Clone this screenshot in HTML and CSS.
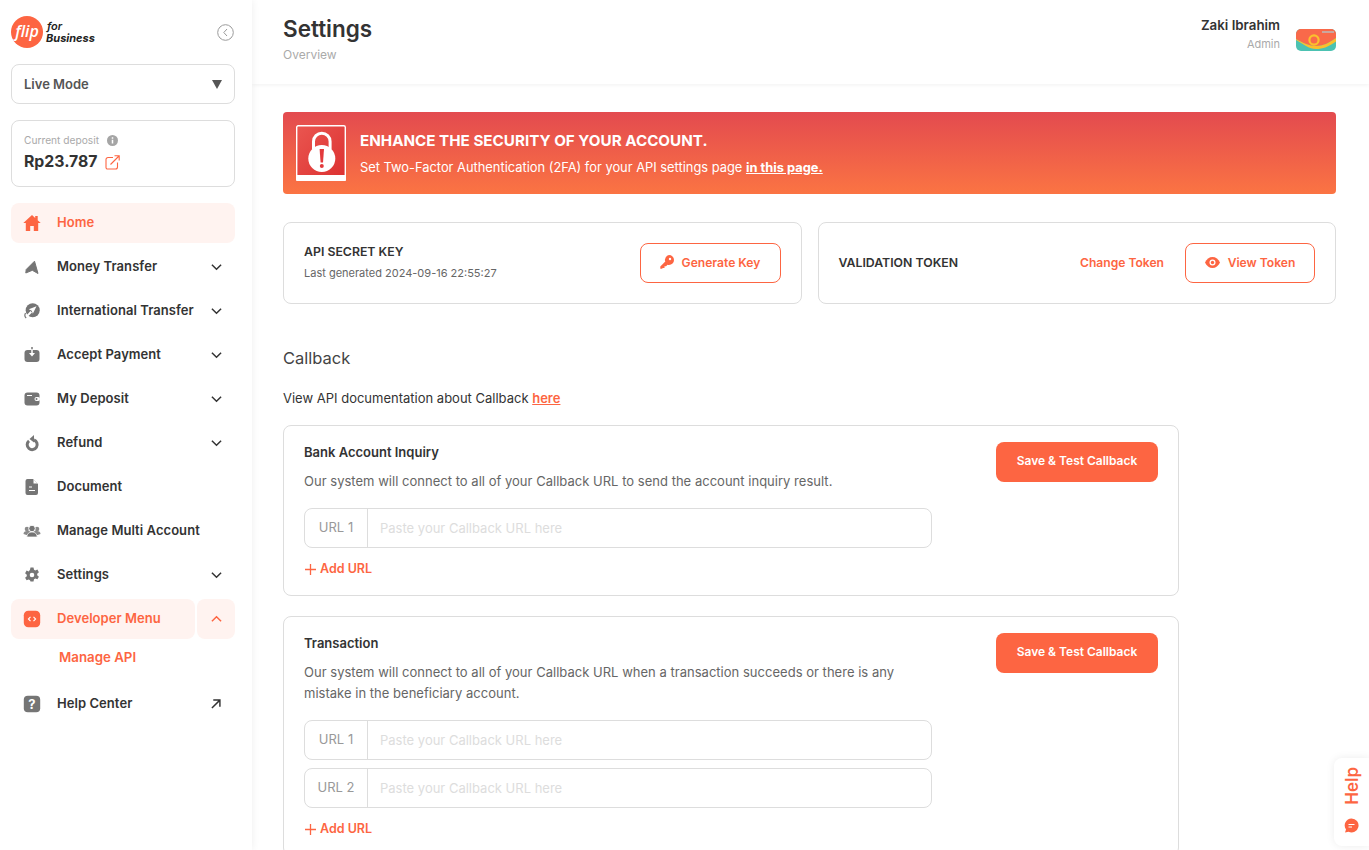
FILE: index.html
```html
<!DOCTYPE html>
<html lang="en">
<head>
<meta charset="utf-8">
<title>Settings</title>
<link rel="stylesheet" href="styles.css">
</head>
<body>
<div class="app">
  <aside class="sidebar">
    <div class="brand">
      <div class="logo"><span class="logo-circle">flip</span><span class="logo-text"><span>for</span><b>Business</b></span></div>
      <svg class="collapse" width="17" height="17" viewBox="0 0 17 17"><circle cx="8.5" cy="8.5" r="7.8" fill="none" stroke="#9a9a9a" stroke-width="1"/><path d="M10 5l-3.2 3.5L10 12" fill="none" stroke="#9a9a9a" stroke-width="1"/></svg>
    </div>
    <div class="mode"><span>Live Mode</span><svg width="10" height="9" viewBox="0 0 10 9"><path d="M0 0h10L5 9z" fill="#555"/></svg></div>
    <div class="deposit">
      <div class="deposit-label"><span>Current deposit</span><svg width="11" height="11" viewBox="0 0 11 11"><circle cx="5.5" cy="5.5" r="5.5" fill="#a5a5a5"/><path d="M5.5 2.3v1.4M5.5 4.8v3.6" stroke="#fff" stroke-width="1.5"/></svg></div>
      <div class="deposit-value"><span>Rp23.787</span><svg width="15" height="15" viewBox="0 0 15 15" fill="none" stroke="#fd6542" stroke-width="1.1"><path d="M8 2.5H3A2 2 0 0 0 1 4.5v8A1.5 1.5 0 0 0 2.500 14h8a2 2 0 0 0 2-2V7.500"/><path d="M5.500 9.500L14 1M9.500 .8H14.200V5.500"/></svg></div>
    </div>
    <nav class="menu">
      <a class="item active">
        <svg class="ico" viewBox="0 0 18 18"><path d="M9 1L.3 9h2.500v8h4.400v-5h3.600v5h4.400V9h2.500l-3-2.800V2h-2.500v1.900z" fill="#fd6542"/></svg>
        <span class="label">Home</span>
      </a>
      <a class="item">
        <svg class="ico" viewBox="0 0 18 18"><path d="M11.500 3.200L15 15.500L9.300 12.300L2.800 15L3.200 11.500z" fill="#757575" stroke="#757575" stroke-linejoin="round"/></svg>
        <span class="label">Money Transfer</span>
        <svg class="chev" viewBox="0 0 12 8"><path d="M1 1.500l5 5 5-5" fill="none" stroke="#333" stroke-width="1.600"/></svg>
      </a>
      <a class="item">
        <svg class="ico" viewBox="0 0 18 18"><circle cx="9.700" cy="8.300" r="7" fill="#757575"/><path d="M13.500 4.200L5.800 7.300l3 1.500 1 3z" fill="#fff"/><path d="M8.300 9.800l-5.300 5.300" stroke="#fff" stroke-width="2"/><path d="M2.500 11c-1 2-.8 3.800.7 5" fill="none" stroke="#757575" stroke-width="1.200"/></svg>
        <span class="label">International Transfer</span>
        <svg class="chev" viewBox="0 0 12 8"><path d="M1 1.500l5 5 5-5" fill="none" stroke="#333" stroke-width="1.600"/></svg>
      </a>
      <a class="item">
        <svg class="ico" viewBox="0 0 18 18"><rect x="1.500" y="4" width="15" height="12" rx="3" fill="#757575"/><path d="M9 1v8" stroke="#757575" stroke-width="1.500"/><path d="M9 3v4" stroke="#fff" stroke-width="1.500"/><path d="M6 7h6l-3 3.500z" fill="#fff"/></svg>
        <span class="label">Accept Payment</span>
        <svg class="chev" viewBox="0 0 12 8"><path d="M1 1.500l5 5 5-5" fill="none" stroke="#333" stroke-width="1.600"/></svg>
      </a>
      <a class="item">
        <svg class="ico" viewBox="0 0 18 18"><rect x="1.500" y="2.500" width="15" height="13" rx="3" fill="#757575"/><path d="M4 5.500h5" stroke="#fff"/><rect x="11.500" y="7" width="5.500" height="4" rx="2" fill="#fff"/><circle cx="13.500" cy="9" r="1" fill="#757575"/></svg>
        <span class="label">My Deposit</span>
        <svg class="chev" viewBox="0 0 12 8"><path d="M1 1.500l5 5 5-5" fill="none" stroke="#333" stroke-width="1.600"/></svg>
      </a>
      <a class="item">
        <svg class="ico" viewBox="0 0 18 18"><path d="M6 6.800a5 5 0 1 0 5 -.8" fill="none" stroke="#757575" stroke-width="3"/><path d="M11 1v7.500L6.500 5z" fill="#757575"/></svg>
        <span class="label">Refund</span>
        <svg class="chev" viewBox="0 0 12 8"><path d="M1 1.500l5 5 5-5" fill="none" stroke="#333" stroke-width="1.600"/></svg>
      </a>
      <a class="item">
        <svg class="ico" viewBox="0 0 18 18"><path d="M4.500 1H10l5 5v9a2 2 0 0 1-2 2H4.500a2 2 0 0 1-2-2V3a2 2 0 0 1 2-2z" fill="#757575"/><path d="M10.500 1.500l4 4h-4z" fill="#fff"/><path d="M6 9h3M6 12.500h6" stroke="#fff" stroke-width="1.200"/></svg>
        <span class="label">Document</span>
      </a>
      <a class="item">
        <svg class="ico" viewBox="0 0 18 18"><circle cx="4" cy="7" r="2.300" fill="#8a8a8a"/><circle cx="14" cy="7" r="2.300" fill="#8a8a8a"/><path d="M.5 12c0-2 1.500-3 3.500-3h10c2 0 3.500 1 3.500 3l-3 1H3.500z" fill="#8a8a8a"/><circle cx="9" cy="6.500" r="3.300" fill="#757575" stroke="#fff"/><path d="M3.800 15c0-3 2.200-5 5.200-5s5.200 2 5.200 5z" fill="#757575" stroke="#fff" stroke-width=".7"/></svg>
        <span class="label">Manage Multi Account</span>
      </a>
      <a class="item">
        <svg class="ico" viewBox="0 0 18 18"><path fill-rule="evenodd" d="M7.500 1.500h3l.5 2.200 1.300.7 2.100-.8 1.500 2.600-1.700 1.500v1.500l1.700 1.500-1.500 2.600-2.100-.8-1.300.7-.5 2.200h-3L7 14.200l-1.300-.7-2.100.8L2.100 11.700l1.700-1.500V8.700L2.100 7.200l1.500-2.600 2.100.8L7 3.700zM9 6.700a2.300 2.300 0 1 0 0 4.600 2.300 2.300 0 0 0 0-4.600z" fill="#757575"/></svg>
        <span class="label">Settings</span>
        <svg class="chev" viewBox="0 0 12 8"><path d="M1 1.500l5 5 5-5" fill="none" stroke="#333" stroke-width="1.600"/></svg>
      </a>
      <div class="dev-row">
        <a class="item active dev-main">
          <svg class="ico" viewBox="0 0 18 18"><rect x=".8" y=".8" width="16.400" height="16.400" rx="4.500" fill="#fd6542"/><path d="M7.500 6.800L5.400 9l2.100 2.200M10.500 6.800L12.600 9l-2.100 2.200" fill="none" stroke="#fff" stroke-width="1.100"/></svg>
          <span class="label">Developer Menu</span>
        </a>
        <a class="dev-toggle"><svg class="chev" viewBox="0 0 12 8"><path d="M1 6.500l5-5 5 5" fill="none" stroke="#fd6542" stroke-width="1.600"/></svg></a>
      </div>
      <a class="subitem">Manage API</a>
      <a class="item">
        <svg class="ico" viewBox="0 0 18 18"><rect x=".8" y=".8" width="16.400" height="16.400" rx="4" fill="#757575"/><text x="9" y="13.500" class="q">?</text></svg>
        <span class="label">Help Center</span>
        <svg class="ext" viewBox="0 0 11 11"><path d="M1 10L9.500 1.500M2.500 1.200h7.300v7.300" fill="none" stroke="#333" stroke-width="1.600"/></svg>
      </a>
    </nav>
  </aside>
  <div class="main">
    <header class="topbar">
      <div><h1>Settings</h1><div class="crumb">Overview</div></div>
      <div class="user">
        <div class="user-text"><div class="user-name">Zaki Ibrahim</div><div class="user-role">Admin</div></div>
        <svg class="avatar" width="40" height="22" viewBox="0 0 40 22"><path d="M5 0h30a5 5 0 0 1 5 5v12a5 5 0 0 1-5 5H5a5 5 0 0 1-5-5V5a5 5 0 0 1 5-5z" fill="#4cc2b2"/><path d="M5 0h30a5 5 0 0 1 5 5v4c-7 5-13 8-20 8S7 14 0 10V5a5 5 0 0 1 5-5z" fill="#f9694a"/><path d="M0 10c7 4 13 7 20 7s13-3 20-8v3.500c-7 5-13 7.500-20 7.500S7 15 0 11z" fill="#fbc02d"/><circle cx="18" cy="11" r="4.600" fill="none" stroke="#fbc02d" stroke-width="2.200"/><path d="M26 3h12" stroke="#bbb" stroke-width="1.500"/></svg>
      </div>
    </header>
    <main class="content">
      <section class="banner">
        <svg class="lock" width="50" height="56" viewBox="0 0 50 56">
          <defs><linearGradient id="lockbg" x1="0" y1="0" x2="1" y2="1"><stop offset="0" stop-color="#ea5650"/><stop offset="1" stop-color="#dc3030"/></linearGradient></defs>
          <rect x=".7" y=".7" width="48.600" height="54.600" rx="1.500" fill="url(#lockbg)" stroke="#fff" stroke-width="1.400"/>
          <rect x="0" y="50" width="50" height="6" rx="1" fill="#fff"/>
          <path d="M17.500 24V16.500a8.300 8.300 0 0 1 16.600 0V24" fill="none" stroke="#fff" stroke-width="3"/>
          <circle cx="25.800" cy="33.500" r="13.500" fill="#fff"/>
          <path d="M23.600 24h4.400l-1 13.500h-2.400z" fill="#e33a3c"/><circle cx="25.800" cy="41" r="2" fill="#e33a3c"/>
        </svg>
        <div class="banner-text">
          <h2>ENHANCE THE SECURITY OF YOUR ACCOUNT.</h2>
          <p>Set Two-Factor Authentication (2FA) for your API settings page <a>in this page.</a></p>
        </div>
      </section>
      <section class="cards">
        <div class="card key-card">
          <div><div class="card-title">API SECRET KEY</div><div class="card-sub">Last generated 2024-09-16 22:55:27</div></div>
          <button class="btn-outline"><svg width="14" height="14" viewBox="0 0 14 14"><path d="M9 0a5 5 0 0 1 0 10 5 5 0 0 1-1.500-.2L6 11.300H4.500V13H2.800l-.8.800H.3v-2.300l5-4.900A5 5 0 0 1 9 0z" fill="#fd6542"/><circle cx="10" cy="4" r="1.200" fill="#fff"/></svg>Generate Key</button>
        </div>
        <div class="card token-card">
          <div class="card-title">VALIDATION TOKEN</div>
          <div class="token-actions"><a class="link-btn">Change Token</a><button class="btn-outline view"><svg width="15" height="11" viewBox="0 0 15 11"><path d="M0 5.500C1.500 2 4.300 0 7.500 0S13.500 2 15 5.500C13.500 9 10.700 11 7.500 11S1.500 9 0 5.500z" fill="#fd6542"/><circle cx="7.500" cy="5.500" r="3" fill="#fff"/><circle cx="7.500" cy="5.500" r="1.700" fill="#fd6542"/></svg>View Token</button></div>
        </div>
      </section>
      <h3 class="section-title">Callback</h3>
      <p class="doc-line">View API documentation about Callback <a>here</a></p>
      <section class="cb-card first">
        <div class="cb-body">
          <h4>Bank Account Inquiry</h4>
          <p class="cb-desc">Our system will connect to all of your Callback URL to send the account inquiry result.</p>
          <div class="url-row"><span class="url-tag">URL 1</span><input class="url-input" placeholder="Paste your Callback URL here"></div>
          <a class="add-url"><svg width="11" height="11" viewBox="0 0 11 11"><path d="M5.500 0v11M0 5.500h11" stroke="#fd6542" stroke-width="1.300"/></svg>Add URL</a>
        </div>
        <button class="btn-solid">Save &amp; Test Callback</button>
      </section>
      <section class="cb-card">
        <div class="cb-body">
          <h4>Transaction</h4>
          <p class="cb-desc narrow">Our system will connect to all of your Callback URL when a transaction succeeds or there is any mistake in the beneficiary account.</p>
          <div class="url-row"><span class="url-tag">URL 1</span><input class="url-input" placeholder="Paste your Callback URL here"></div>
          <div class="url-row second"><span class="url-tag">URL 2</span><input class="url-input" placeholder="Paste your Callback URL here"></div>
          <a class="add-url"><svg width="11" height="11" viewBox="0 0 11 11"><path d="M5.500 0v11M0 5.500h11" stroke="#fd6542" stroke-width="1.300"/></svg>Add URL</a>
        </div>
        <button class="btn-solid">Save &amp; Test Callback</button>
      </section>
    </main>
  </div>
</div>
<div class="help-tab">
  <span class="help-word">Help</span>
  <svg width="15" height="15" viewBox="0 0 15 15"><path d="M7.500.5a7 7 0 1 1-3 13.300L1 14.500l1-3A7 7 0 0 1 7.500.5z" fill="#fd6542"/><path d="M4.500 6.500h6M4.500 9h3.500" stroke="#fff"/></svg>
</div>
</body>
</html>
```
FILE: styles.css
```css
* { box-sizing: border-box; }
html, body { margin: 0; height: 850px; overflow: hidden; background: #fff; }
body { font-family: Inter, "Open Sans", sans-serif; color: #333; font-size: 13px; }
.app { display: flex; height: 850px; }
a { cursor: pointer; }

.sidebar { width: 252px; flex: none; height: 850px; padding: 16px 17px 0 11px; box-shadow: 0 0 8px rgba(0,0,0,.07); z-index: 1; background: #fff; }
.brand { display: flex; justify-content: space-between; align-items: center; height: 32px; }
.logo { display: flex; align-items: center; gap: 3px; }
.logo-circle { width: 32px; height: 32px; border-radius: 50%; background: #fd6542; color: #fff; font-family: "Open Sans", sans-serif; font-style: italic; font-weight: 600; font-size: 16px; line-height: 31px; text-align: center; }
.logo-text { display: flex; flex-direction: column; font-size: 11px; line-height: 12px; color: #222; font-style: italic; font-weight: 600; }
.logo-text span { margin-left: 1px; }
.logo-text b { font-weight: 700; }
.collapse { margin-right: 1px; }
.mode { height: 40px; margin-top: 16px; border: 1px solid #ddd; border-radius: 8px; padding: 0 12px; display: flex; align-items: center; justify-content: space-between; font-weight: 600; color: #555; }
.deposit { height: 67px; margin-top: 16px; border: 1px solid #ddd; border-radius: 8px; padding: 12px 12px 0; }
.deposit-label { display: flex; align-items: center; gap: 8px; font-size: 10.200px; color: #aaa; line-height: 14px; }
.deposit-value { display: flex; align-items: center; gap: 8px; margin-top: 5px; font-size: 15.800px; font-weight: 700; line-height: 20px; }
.menu { margin-top: 16px; display: flex; flex-direction: column; gap: 4px; }
.item { height: 40px; display: flex; align-items: center; padding: 0 13px 0 12px; border-radius: 8px; font-weight: 600; color: #333; }
.ico { width: 18px; height: 18px; flex: none; margin-right: 16px; }
.label { flex: 1; letter-spacing: .06px; padding-bottom: 2px; }
.chev { width: 11px; height: 8px; flex: none; }
.ext { width: 10px; height: 10px; flex: none; margin-right: 1px; }
.item.active { background: #fff3f0; color: #fd6542; }
.dev-row { display: flex; gap: 2px; }
.dev-main { flex: 1; }
.dev-toggle { width: 38px; height: 40px; background: #fff3f0; border-radius: 8px; display: flex; align-items: center; justify-content: center; }
.subitem { height: 37px; margin-left: 48px; padding-top: 5px; line-height: 18px; font-size: 13.300px; font-weight: 600; color: #fd6542; }

.main { flex: 1; min-width: 0; }
.topbar { height: 84px; display: flex; justify-content: space-between; padding: 16px 33px 0 31px; box-shadow: 0 1px 4px rgba(0,0,0,.06); }
h1 { margin: 0; font-size: 22.500px; line-height: 26px; font-weight: 600; color: #333; }
.crumb { font-size: 12px; color: #aaa; margin-top: 4px; line-height: 18px; }
.user { display: flex; gap: 16px; height: 48px; align-items: flex-start; }
.user-text { text-align: right; }
.user-name { font-weight: 600; line-height: 18px; font-size: 13.300px; }
.user-role { font-size: 11px; color: #aaa; line-height: 16px; margin-top: 2px; }
.avatar { margin-top: 13px; }
.content { padding: 28px 33px 0 31px; }
.banner { height: 82px; border-radius: 4px; background: linear-gradient(180deg, #e34a4f 0%, #fb7443 100%); display: flex; align-items: center; padding-left: 13px; color: #fff; }
.lock { flex: none; margin-right: 14px; }
.banner h2 { margin: 2px 0 0; font-size: 15.200px; line-height: 20px; font-weight: 700; }
.banner p { margin: 8px 0 0; font-size: 12.870px; line-height: 18px; }
.banner a { font-weight: 700; text-decoration: underline; }
.cards { display: flex; gap: 16px; margin-top: 28px; }
.card { height: 82px; flex: 1; border: 1px solid #ddd; border-radius: 8px; display: flex; align-items: center; justify-content: space-between; padding: 0 20px; }
.card-title { font-weight: 600; font-size: 12.300px; line-height: 18px; }
.key-card .card-title { margin-top: -2px; }
.card-sub { font-size: 11px; color: #666; margin-top: 4px; line-height: 16px; }
.btn-outline { height: 40px; border: 1px solid #fd6542; background: #fff; border-radius: 8px; color: #fd6542; font: 600 12.100px Inter, sans-serif; display: flex; align-items: center; justify-content: center; gap: 8px; width: 141px; padding: 0 0 2px; }
.btn-outline.view { width: 130px; }
.token-actions { display: flex; align-items: center; gap: 21px; }
.link-btn { color: #fd6542; font-weight: 600; font-size: 12.100px; margin-bottom: 1px; }
.section-title { margin: 43px 0 0; font-size: 16.500px; line-height: 22px; font-weight: 400; color: #444; }
.doc-line { margin: 19px 0 0; font-size: 13px; line-height: 20px; }
.doc-line a { color: #fd6542; font-weight: 600; text-decoration: underline; }
.cb-card { width: 896px; border: 1px solid #ddd; border-radius: 8px; padding: 16px 20px 17px 20px; display: flex; justify-content: space-between; align-items: flex-start; margin-top: 20px; }
.cb-card.first { margin-top: 17px; }
.cb-body { width: 628px; }
h4 { margin: 0; padding-top: 1px; font-size: 13px; line-height: 18px; font-weight: 600; }
.cb-desc { margin: 10px 0 0; color: #666; font-size: 13px; line-height: 21px; letter-spacing: .02px; }
.cb-desc.narrow { width: 600px; }
.url-row { height: 40px; margin-top: 16px; border: 1px solid #ddd; border-radius: 8px; display: flex; }
.url-row.second { margin-top: 8px; }
.url-tag { width: 63px; flex: none; border-right: 1px solid #ddd; text-align: center; line-height: 37px; color: #999; font-size: 13px; }
.url-input { flex: 1; border: 0; outline: 0; background: transparent; padding: 0 12px 1px; font: 13px Inter, sans-serif; border-radius: 8px; min-width: 0; }
.url-input::placeholder { color: #ddd; opacity: 1; }
.add-url { display: flex; align-items: center; gap: 4px; margin-top: 12px; color: #fd6542; font-weight: 600; font-size: 12.500px; line-height: 18px; padding-left: 1px; }
.btn-solid { width: 162px; height: 40px; flex: none; background: #fd6542; color: #fff; border: 0; border-radius: 8px; font: 600 12px Inter, sans-serif; padding: 0 0 3px; }
.help-tab { position: absolute; right: 0; top: 758px; width: 35px; height: 88px; background: #fff; border-radius: 8px 0 0 8px; box-shadow: 0 0 8px rgba(0,0,0,.08); display: flex; flex-direction: column; align-items: center; padding-top: 9px; gap: 13px; }
.help-word { writing-mode: vertical-rl; transform: rotate(180deg); font-weight: 600; font-size: 17px; line-height: 20px; color: #fd6542; }
.q { font: 700 13px Inter, sans-serif; fill: #fff; text-anchor: middle; }
```
